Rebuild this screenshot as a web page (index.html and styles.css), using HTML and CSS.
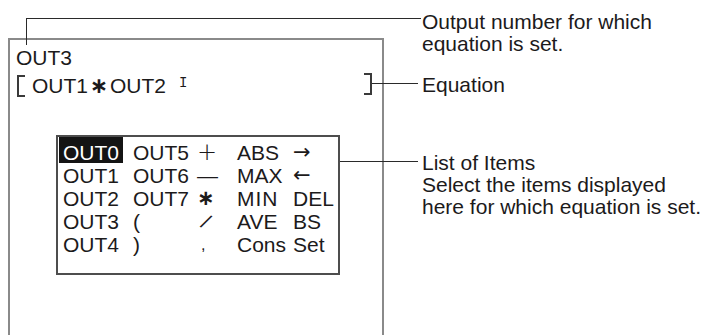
FILE: index.html
```html
<!DOCTYPE html>
<html lang="en">
<head>
<meta charset="utf-8">
<title>Equation setting</title>
<link rel="stylesheet" href="styles.css">
</head>
<body>
<div class="page">
  <div class="screen">
    <div class="out-label">OUT3</div>
    <div class="eq">
      <span class="brk brk-l"></span>
      <span class="tok t-out1">OUT1</span>
      <span class="tok ast">∗</span>
      <span class="tok">OUT2</span>
      <span class="cursor">I</span>
      <span class="brk brk-r"></span>
    </div>
    <div class="items">
      <span class="c1 sel">OUT0</span><span>OUT5</span><span class="sym plus">+</span><span>ABS</span><span class="arrow">→</span>
      <span class="c1">OUT1</span><span>OUT6</span><span class="sym dash">—</span><span>MAX</span><span class="arrow">←</span>
      <span class="c1">OUT2</span><span>OUT7</span><span class="sym ast">∗</span><span class="sp">MIN</span><span>DEL</span>
      <span class="c1">OUT3</span><span>(</span><span class="sym"><span class="slash">/</span></span><span>AVE</span><span>BS</span>
      <span class="c1">OUT4</span><span>)</span><span class="sym comma">,</span><span>Cons</span><span>Set</span>
    </div>
  </div>

  <div class="notes">
    <p class="note n1">Output number for which<br>equation is set.</p>
    <p class="note n2">Equation</p>
    <p class="note n3">List of Items<br>Select the items displayed<br>here for which equation is set.</p>
  </div>

  <div class="lead lead-h1"></div>
  <div class="lead lead-v1"></div>
  <div class="lead lead-h2"></div>
  <div class="lead lead-h3"></div>
</div>
</body>
</html>
```

FILE: styles.css
```css
html, body {
  margin: 0;
  padding: 0;
  background: #ffffff;
}

body {
  font-family: "Liberation Sans", Arial, "DejaVu Sans", sans-serif;
  font-size: 21px;
  color: #1c1a1b;
}

.page {
  position: relative;
  width: 710px;
  height: 335px;
  overflow: hidden;
  display: flex;
  align-items: flex-start;
}

/* ---------- outer screen ---------- */
.screen {
  margin: 38px 0 0 8px;
  width: 356px;
  height: 320px;
  border: 2px solid #8a8a8a;
  border-bottom: none;
  padding: 6px 10px 0 6px;
  flex: none;
}

.out-label {
  height: 23px;
  line-height: 23px;
}

.eq {
  margin-top: 5px;
  height: 23px;
  display: flex;
  align-items: center;
}

.tok {
  line-height: 23px;
}

.t-out1 {
  margin-left: 7px;
}

.eq .ast {
  width: 22px;
  text-align: center;
  font-family: "DejaVu Sans", sans-serif;
  font-weight: bold;
  font-size: 22px;
}

.cursor {
  font-family: "Liberation Mono", monospace;
  font-size: 14px;
  line-height: 14px;
  margin-left: 13px;
  margin-bottom: 5px;
}

.brk {
  width: 6px;
  height: 18px;
  border: 2px solid #3a3a3a;
  flex: none;
}

.brk-l {
  border-right: none;
  margin-left: 1px;
}

.brk-r {
  border-left: none;
  margin-left: auto;
  margin-bottom: 4px;
}

/* ---------- item list ---------- */
.items {
  margin: 38px 0 0 40px;
  width: 284px;
  height: 140px;
  border: 2px solid #4d4d4d;
  padding: 4px 0 0 1px;
  box-sizing: border-box;
  display: grid;
  grid-template-columns: 74px 64px 40px 56px 1fr;
  grid-auto-rows: 23px;
  line-height: 23px;
}

.items > span {
  white-space: nowrap;
}

.c1 {
  padding-left: 4px;
}

.items .sel {
  justify-self: start;
  background: #141414;
  color: #ffffff;
  padding: 0 4px;
  margin-top: -4px;
  padding-top: 4px;
  height: 22px;
}

.sym {
  font-family: "DejaVu Sans", sans-serif;
  font-weight: normal;
}

.plus {
  font-size: 24px;
  font-weight: 300;
}

.dash {
  font-family: "Liberation Sans", sans-serif;
}

.items .ast {
  font-weight: bold;
  font-size: 21px;
}

.slash {
  display: inline-block;
  font-family: "Liberation Sans", sans-serif;
  transform: translateX(6px) rotate(30deg);
}

.comma {
  font-family: "Liberation Sans", sans-serif;
  font-size: 16px;
  padding-left: 4px;
}

.arrow {
  font-family: "DejaVu Sans", sans-serif;
  font-size: 21px;
}

.sp {
  letter-spacing: 1px;
}

/* ---------- notes ---------- */
.notes {
  margin-left: 38px;
  padding-top: 11px;
  flex: none;
}

.note {
  margin: 0;
  line-height: 22px;
}

.n2 {
  margin-top: 19px;
}

.n3 {
  margin-top: 56px;
}

/* ---------- leader lines (overlay) ---------- */
.lead {
  position: absolute;
  background: #2a2a2a;
}

.lead-h1 {
  left: 26px;
  top: 18px;
  width: 395px;
  height: 1px;
}

.lead-v1 {
  left: 26px;
  top: 18px;
  width: 1px;
  height: 27px;
}

.lead-h2 {
  left: 372px;
  top: 83px;
  width: 46px;
  height: 1px;
}

.lead-h3 {
  left: 340px;
  top: 161px;
  width: 78px;
  height: 1px;
}
```
